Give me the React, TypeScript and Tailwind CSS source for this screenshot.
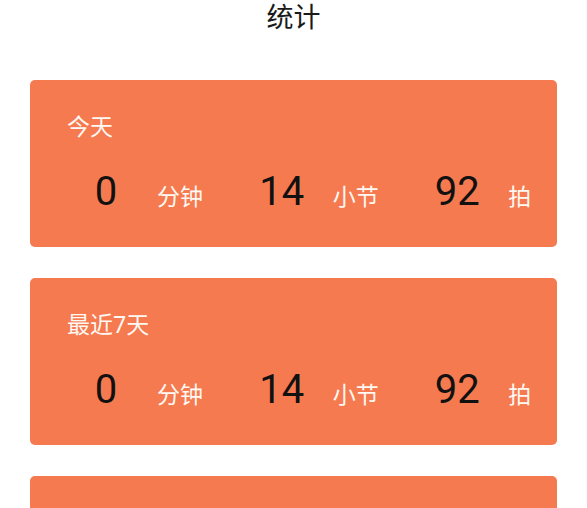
const font = { fontFamily: '"Noto Sans", "Noto Sans CJK SC", sans-serif' };

type Stat = { value: number; unit: string };

const periods: { title: string; stats: Stat[] }[] = [
  {
    title: "今天",
    stats: [
      { value: 0, unit: "分钟" },
      { value: 14, unit: "小节" },
      { value: 92, unit: "拍" },
    ],
  },
  {
    title: "最近7天",
    stats: [
      { value: 0, unit: "分钟" },
      { value: 14, unit: "小节" },
      { value: 92, unit: "拍" },
    ],
  },
  {
    title: "最近30天",
    stats: [
      { value: 0, unit: "分钟" },
      { value: 14, unit: "小节" },
      { value: 92, unit: "拍" },
    ],
  },
];

function StatCard({ title, stats }: { title: string; stats: Stat[] }) {
  return (
    <div className="h-[167px] shrink-0 rounded-[5px] bg-[#f67a4f] pt-[32px]">
      <p className="pl-[37px] text-[23px] leading-[28px] text-[#fff8f3]">{title}</p>
      <div className="mt-[29px] grid grid-cols-3">
        {stats.map((s, i) => (
          <div key={i} className="flex items-baseline pl-[36px]">
            <span
              className="w-[80px] text-center text-[40px] leading-[46px] text-[#111]"
              style={{ fontFamily: 'Roboto, "Noto Sans", sans-serif' }}
            >
              {s.value}
            </span>
            <span className="ml-[11px] text-[23px] leading-[28px] text-[#fff8f3]">{s.unit}</span>
          </div>
        ))}
      </div>
    </div>
  );
}

export default function App() {
  return (
    <div className="h-[508px] w-[587px] overflow-hidden bg-white" style={font}>
      <h1 className="pt-[1px] text-center text-[27px] leading-[32px] text-[#1a1a1a]">统计</h1>
      <div className="mt-[47px] flex flex-col gap-[31px] px-[30px]">
        {periods.map((p) => (
          <StatCard key={p.title} title={p.title} stats={p.stats} />
        ))}
      </div>
    </div>
  );
}
